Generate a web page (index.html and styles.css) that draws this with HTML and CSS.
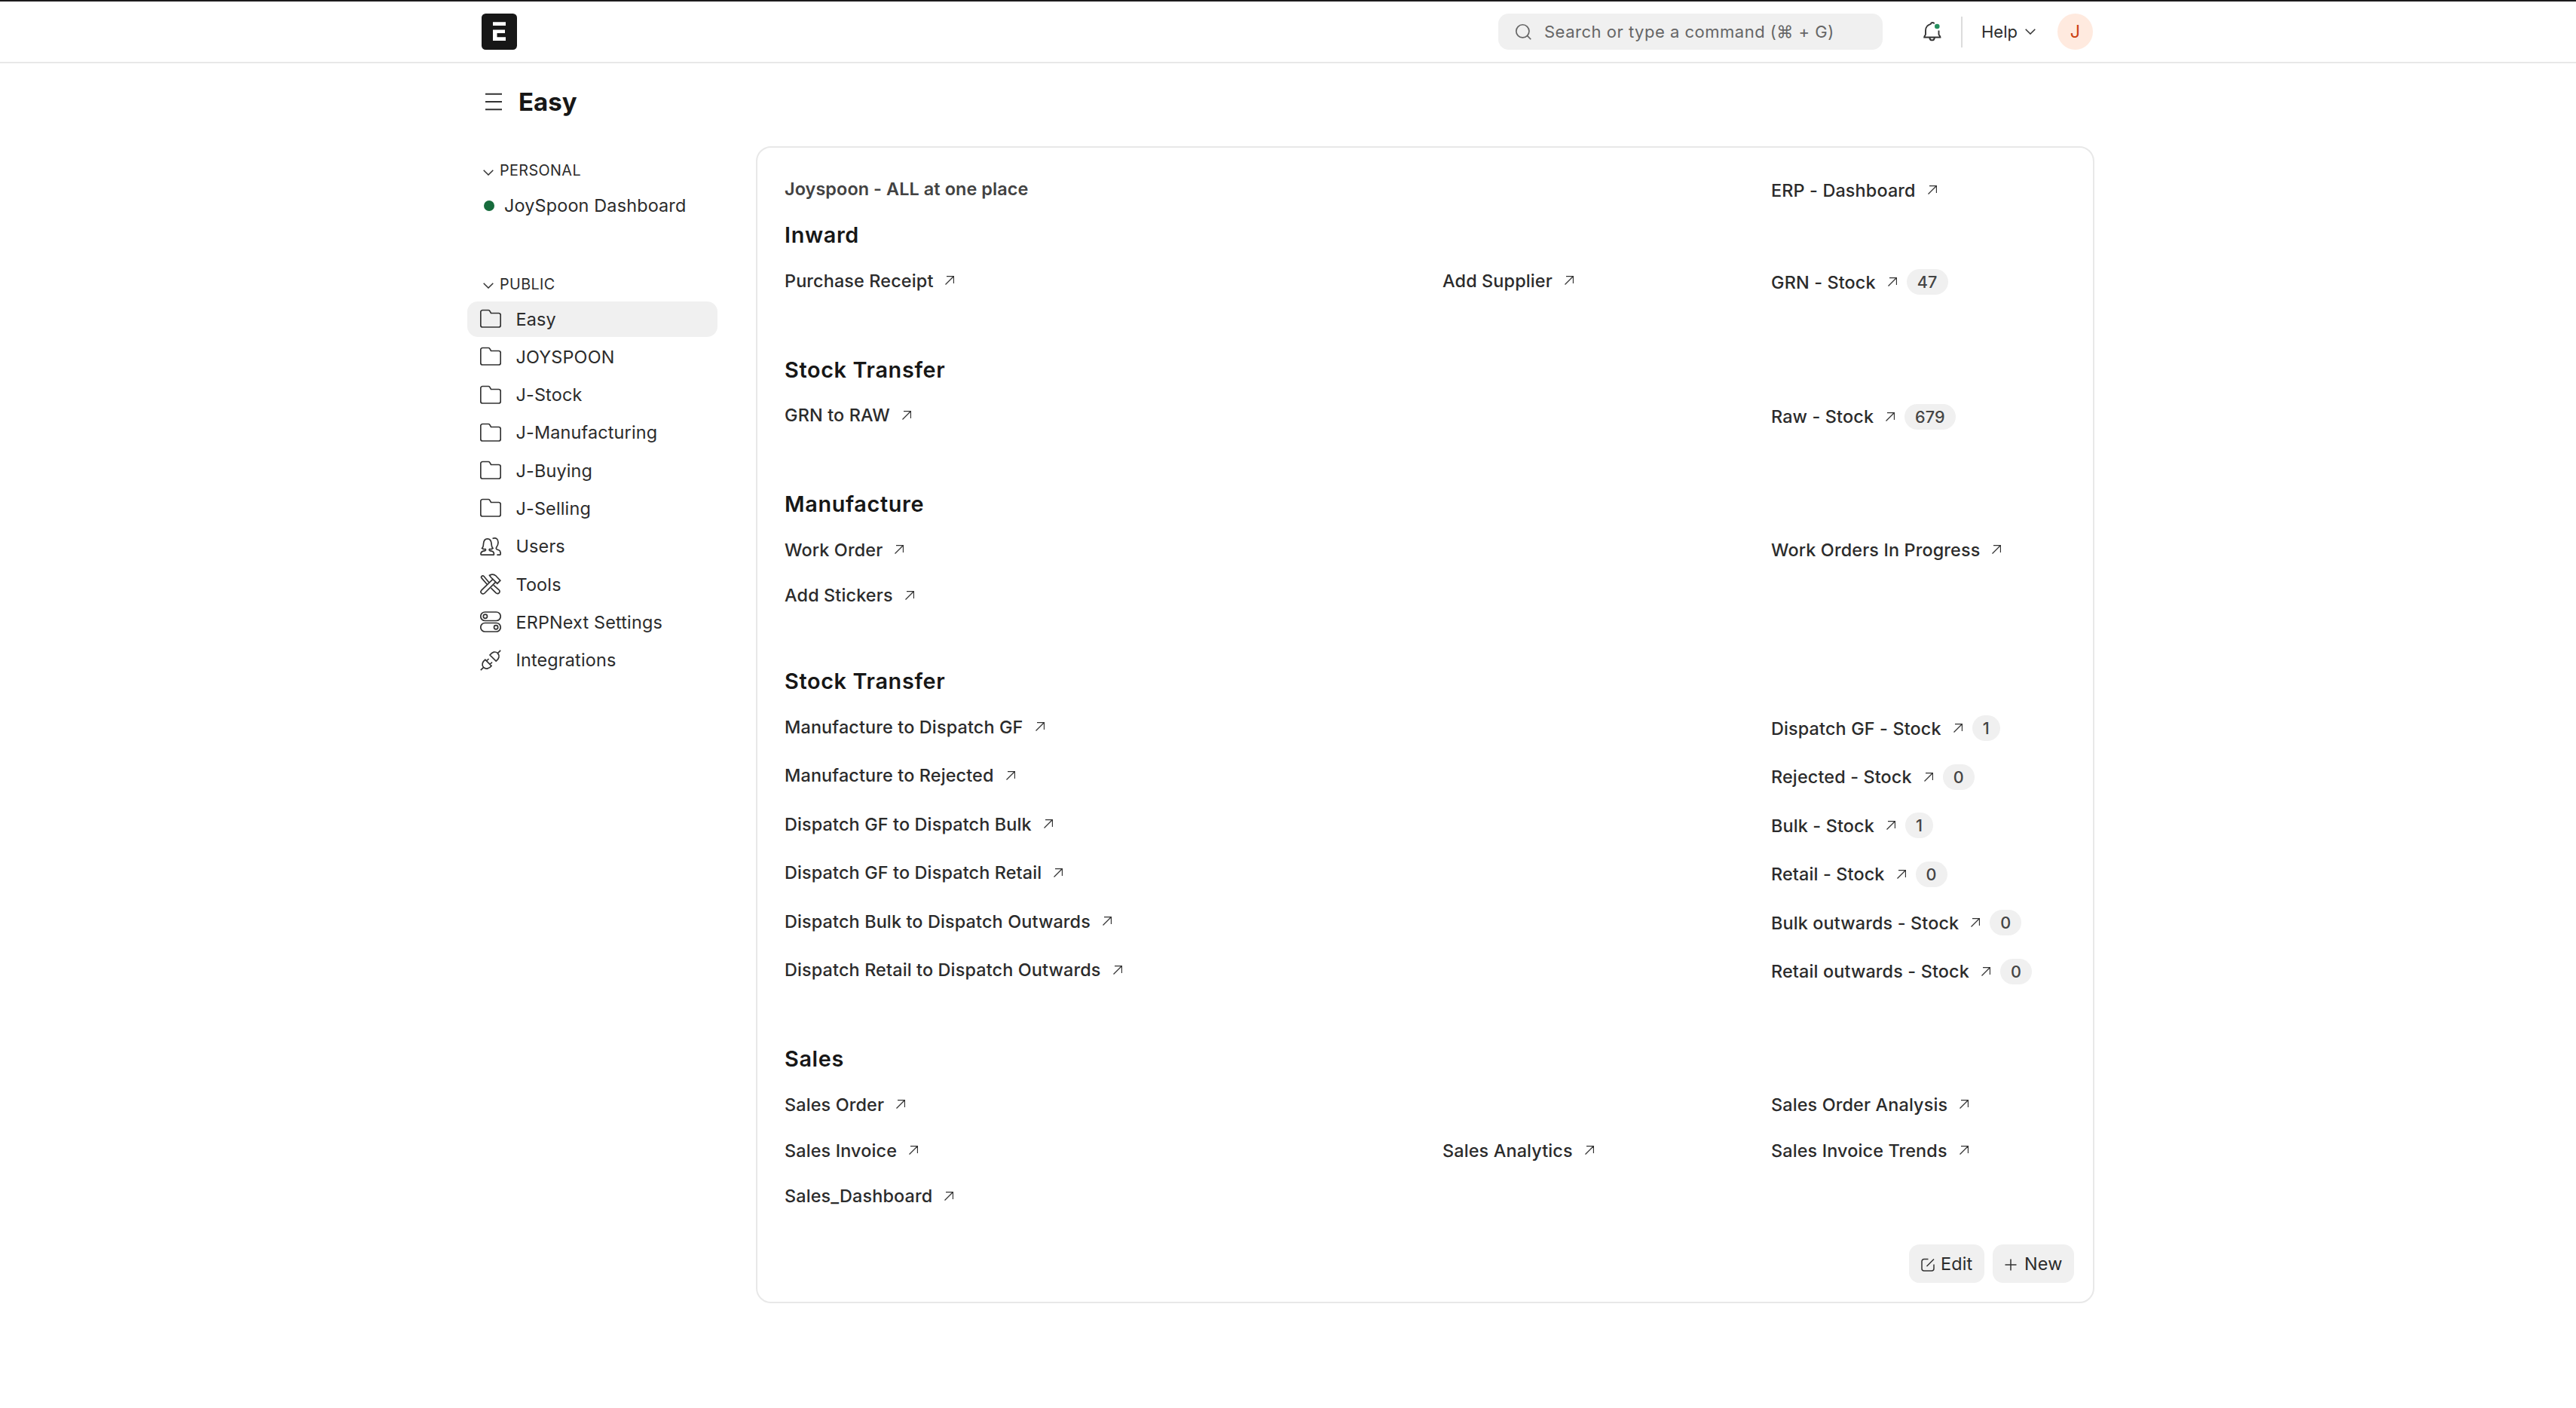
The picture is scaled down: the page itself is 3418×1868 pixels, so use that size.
FILE: index.html
```html
<!DOCTYPE html>
<html lang="en">
<head>
    <meta charset="UTF-8">
    <meta name="viewport" content="width=device-width, initial-scale=1.0">
    <title>Easy</title>
    <link rel="stylesheet" href="styles.css">
</head>
<body>
    <!-- icon sprite -->
    <svg class="sprite">
        <symbol id="icon-arrow" viewBox="0 0 12 12"><path d="M.5 11.5l11-11M2 .5h9.500v9.500"/></symbol>
        <symbol id="icon-down" viewBox="0 0 14 8"><path d="M.7.7L7 7L13.300.7"/></symbol>
        <symbol id="icon-folder" viewBox="0 0 28 28"><path d="M.8 5a2.500 2.500 0 0 1 2.500-2.500H11a2 2 0 0 1 1.700.9L14.500 6.500h10.200a2.500 2.500 0 0 1 2.500 2.500v13.500a2.500 2.500 0 0 1-2.500 2.500H3.300a2.500 2.500 0 0 1-2.500-2.500z"/></symbol>
        <symbol id="icon-users" viewBox="0 0 28 28"><path d="M2 25.200h15.500c.8 0 1-.6.9-1.400-.2-2.300-.8-3-2.400-3.400l-3-.8c-1-.3-1.200-1.600-.4-2.200 1.300.6 3 .2 4.400-1-2-1.500-1.600-3-1.900-6C14.800 6.500 13.300 3.800 9.800 3.800S4.800 6.500 4.500 10.400c-.3 3 .1 4.500-1.900 6 1.400 1.200 3.100 1.600 4.400 1 .8.6.6 1.900-.4 2.200l-3 .8C2 20.800 1.200 21.500 1 23.800c-.1.800.2 1.400 1 1.400zM16.500 3.500c5-1.800 7.700 1.200 7.500 5.500-.1 3-1 4.500-2.200 6-.8 1-.6 2.600.6 3l2.400.8c1.800.6 2.400 1.600 2.400 4.600 0 1.200-.4 1.800-1.400 1.800h-3.500"/></symbol>
        <symbol id="icon-tools" viewBox="0 0 28 28"><path d="M1.800 22.200L17 7.500l3.700 3.700L6 26a2.700 2.700 0 0 1-4.200-3.800zM12.500 2.200C16.500 0 19 1 21 3l5.800 6.200-4 4L14 4.500zM12.200 12.200L5 3.500a1.800 1.800 0 0 0-2.800 2.700l7.500 8.500M18 15.300l7 6.200c3 3-1 6.500-4 4.200l-6.500-6.500"/></symbol>
        <symbol id="icon-settings" viewBox="0 0 28 28"><rect x=".8" y="1" width="26.400" height="11.500" rx="5.700"/><rect x=".8" y="15.500" width="26.400" height="11.500" rx="5.700"/><circle cx="6.900" cy="6.800" r="2.600"/><circle cx="21.100" cy="21.200" r="2.600"/></symbol>
        <symbol id="icon-plug" viewBox="0 0 28 28"><path d="M.8 27.200l3.800-3.800M4.600 23.400c-3-3.500-1.400-7.600 2.200-10.200l8.200 8.200c-2.800 3.600-7 5-10.400 2zM8.500 15l3-3M13 19.500l3-3M27.200.8l-3.800 3.800M23.400 4.600c3 3.500 1.800 7.200-2.200 10.600L13 7C16.200 3 20 1.600 23.400 4.600z"/></symbol>
    </svg>

    <header class="navbar">
        <div class="navbar-inner">
            <svg class="logo" viewBox="0 0 47 48"><rect width="47" height="48" rx="5.500" fill="#171717"/><path d="M15 11.300h17v4.700H15zM15 21.500h16v4.500H20.500v5.300H32V36H15z" fill="#fff"/></svg>
            <div class="search">
                <svg class="search-icon" viewBox="0 0 22 22"><circle cx="9.800" cy="9.800" r="9"/><path d="M16.200 16.200l5 5"/></svg>
                <span>Search or type a command (⌘ + G)</span>
            </div>
            <svg class="bell" viewBox="0 0 24 26"><path d="M14.500 2.600C14 .6 10.500.4 9.800 2.800 5.500 4 3 7.500 3 11.500v5c0 1.500-1.800 2-1.800 4h21.300c0-2-2-2.500-2-4V11.500M8.300 21c.6 4.500 6 4.500 6.600 0"/><circle class="bell-dot" cx="18.300" cy="6" r="3.300"/></svg>
            <div class="divider"></div>
            <div class="help">Help <svg class="down"><use href="#icon-down"/></svg></div>
            <div class="avatar">J</div>
        </div>
    </header>

    <div class="container">
        <div class="page-head">
            <svg class="menu-icon" viewBox="0 0 24 24"><path d="M1 1.700h22M1 12h22M1 22.300h22"/></svg>
            <h1>Easy</h1>
        </div>

        <div class="layout">
            <nav class="sidebar">
                <div class="sidebar-label"><svg class="down"><use href="#icon-down"/></svg>PERSONAL</div>
                <div class="sidebar-item personal"><span class="dot"></span>JoySpoon Dashboard</div>
                <div class="sidebar-label public"><svg class="down"><use href="#icon-down"/></svg>PUBLIC</div>
                <div class="sidebar-item selected"><svg><use href="#icon-folder"/></svg>Easy</div>
                <div class="sidebar-item"><svg><use href="#icon-folder"/></svg>JOYSPOON</div>
                <div class="sidebar-item"><svg><use href="#icon-folder"/></svg>J-Stock</div>
                <div class="sidebar-item"><svg><use href="#icon-folder"/></svg>J-Manufacturing</div>
                <div class="sidebar-item"><svg><use href="#icon-folder"/></svg>J-Buying</div>
                <div class="sidebar-item"><svg><use href="#icon-folder"/></svg>J-Selling</div>
                <div class="sidebar-item"><svg><use href="#icon-users"/></svg>Users</div>
                <div class="sidebar-item"><svg><use href="#icon-tools"/></svg>Tools</div>
                <div class="sidebar-item"><svg><use href="#icon-settings"/></svg>ERPNext Settings</div>
                <div class="sidebar-item"><svg><use href="#icon-plug"/></svg>Integrations</div>
            </nav>

            <main class="workspace">
                <section class="intro">
                    <div class="row">
                        <div class="link note">Joyspoon - ALL at one place</div>
                        <div class="link right counted">ERP - Dashboard <svg><use href="#icon-arrow"/></svg></div>
                    </div>
                </section>

                <section>
                    <h2>Inward</h2>
                    <div class="row">
                        <div class="link">Purchase Receipt <svg><use href="#icon-arrow"/></svg></div>
                        <div class="link middle">Add Supplier <svg><use href="#icon-arrow"/></svg></div>
                        <div class="link right counted">GRN - Stock <svg><use href="#icon-arrow"/></svg><span class="count">47</span></div>
                    </div>
                </section>

                <section>
                    <h2>Stock Transfer</h2>
                    <div class="row">
                        <div class="link">GRN to RAW <svg><use href="#icon-arrow"/></svg></div>
                        <div class="link right counted">Raw - Stock <svg><use href="#icon-arrow"/></svg><span class="count">679</span></div>
                    </div>
                </section>

                <section>
                    <h2>Manufacture</h2>
                    <div class="row">
                        <div class="link">Work Order <svg><use href="#icon-arrow"/></svg></div>
                        <div class="link right">Work Orders In Progress <svg><use href="#icon-arrow"/></svg></div>
                    </div>
                    <div class="row">
                        <div class="link">Add Stickers <svg><use href="#icon-arrow"/></svg></div>
                    </div>
                </section>

                <section>
                    <h2>Stock Transfer</h2>
                    <div class="row">
                        <div class="link">Manufacture to Dispatch GF <svg><use href="#icon-arrow"/></svg></div>
                        <div class="link right counted">Dispatch GF - Stock <svg><use href="#icon-arrow"/></svg><span class="count">1</span></div>
                    </div>
                    <div class="row">
                        <div class="link">Manufacture to Rejected <svg><use href="#icon-arrow"/></svg></div>
                        <div class="link right counted">Rejected - Stock <svg><use href="#icon-arrow"/></svg><span class="count">0</span></div>
                    </div>
                    <div class="row">
                        <div class="link">Dispatch GF to Dispatch Bulk <svg><use href="#icon-arrow"/></svg></div>
                        <div class="link right counted">Bulk - Stock <svg><use href="#icon-arrow"/></svg><span class="count">1</span></div>
                    </div>
                    <div class="row">
                        <div class="link">Dispatch GF to Dispatch Retail <svg><use href="#icon-arrow"/></svg></div>
                        <div class="link right counted">Retail - Stock <svg><use href="#icon-arrow"/></svg><span class="count">0</span></div>
                    </div>
                    <div class="row">
                        <div class="link">Dispatch Bulk to Dispatch Outwards <svg><use href="#icon-arrow"/></svg></div>
                        <div class="link right counted">Bulk outwards - Stock <svg><use href="#icon-arrow"/></svg><span class="count">0</span></div>
                    </div>
                    <div class="row">
                        <div class="link">Dispatch Retail to Dispatch Outwards <svg><use href="#icon-arrow"/></svg></div>
                        <div class="link right counted">Retail outwards - Stock <svg><use href="#icon-arrow"/></svg><span class="count">0</span></div>
                    </div>
                </section>

                <section class="sales">
                    <h2>Sales</h2>
                    <div class="row">
                        <div class="link">Sales Order <svg><use href="#icon-arrow"/></svg></div>
                        <div class="link right">Sales Order Analysis <svg><use href="#icon-arrow"/></svg></div>
                    </div>
                    <div class="row">
                        <div class="link">Sales Invoice <svg><use href="#icon-arrow"/></svg></div>
                        <div class="link middle">Sales Analytics <svg><use href="#icon-arrow"/></svg></div>
                        <div class="link right">Sales Invoice Trends <svg><use href="#icon-arrow"/></svg></div>
                    </div>
                    <div class="row">
                        <div class="link">Sales_Dashboard <svg><use href="#icon-arrow"/></svg></div>
                    </div>
                </section>

                <div class="actions">
                    <button class="btn"><svg viewBox="0 0 18 18"><path d="M9.500 1.500H4A3 3 0 0 0 1 4.500v9.500a3 3 0 0 0 3 3h10a3 3 0 0 0 3-3V8.500M7.500 11L17 1.500"/></svg>Edit</button>
                    <button class="btn new"><svg viewBox="0 0 16 16"><path d="M8 .5v15M.5 8h15"/></svg>New</button>
                </div>
            </main>
        </div>
    </div>
</body>
</html>
```
FILE: styles.css
```css
* {
    box-sizing: border-box;
}
body {
    margin: 0;
    min-height: 1868px;
    background-color: #fff;
    border-top: 2px solid #1c1a1c;
    color: #2b2b2b;
    font-family: "Inter", sans-serif;
    font-size: 23.4px;
    letter-spacing: 0.007em;
}
svg {
    fill: none;
    stroke: #333;
    stroke-width: 1.5;
    flex-shrink: 0;
    overflow: visible;
}
.sprite {
    display: none;
}
.navbar {
    height: 82px;
    border-bottom: 2px solid #e8e8e8;
}
.navbar-inner {
    width: 2138px;
    height: 80px;
    margin-left: 639px;
    display: flex;
    align-items: center;
}
.logo {
    width: 47px;
    height: 48px;
    stroke: none;
}
.search {
    display: flex;
    align-items: center;
    gap: 17px;
    width: 510px;
    height: 48px;
    margin-left: auto;
    padding-left: 23px;
    border-radius: 14px;
    background-color: #f0f0f0;
    color: #666;
    font-size: 22px;
    letter-spacing: 0.023em;
}
.search-icon {
    width: 21px;
    height: 21px;
    stroke: #666;
    stroke-width: 1.8;
}
.bell {
    width: 24px;
    height: 26px;
    margin-left: 54px;
    stroke-width: 1.9;
}
.bell-dot {
    fill: #278f5e;
    stroke: none;
}
.divider {
    width: 2px;
    height: 41px;
    margin-left: 26px;
    background-color: #dcdcdc;
}
.help {
    display: flex;
    align-items: center;
    justify-content: space-between;
    width: 72px;
    margin-left: 25px;
    font-size: 22px;
    letter-spacing: 0;
}
.down {
    width: 14px;
    height: 8px;
}
.avatar {
    width: 47px;
    height: 48px;
    margin-left: 29px;
    border-radius: 50%;
    background-color: #ffeadf;
    color: #cc4314;
    line-height: 48px;
    text-align: center;
}
.container {
    width: 2159px;
    margin-left: 620px;
}
.page-head {
    display: flex;
    align-items: center;
    gap: 21px;
    height: 102px;
    padding-left: 23px;
}
.menu-icon {
    width: 24px;
    height: 24px;
    stroke-width: 2;
}
h1 {
    margin: 0;
    font-size: 33px;
    font-weight: 700;
    letter-spacing: 0;
    color: #171717;
}
.layout {
    display: flex;
    align-items: flex-start;
    padding-top: 6px;
}
.sidebar {
    width: 332px;
    margin-right: 51px;
    padding-top: 16px;
}
.sidebar-label {
    display: flex;
    align-items: center;
    gap: 8px;
    height: 36px;
    padding-left: 21px;
    font-size: 19.8px;
    letter-spacing: 0.02em;
}
.sidebar-label .down {
    margin-top: 5px;
}
.sidebar-label.public {
    margin-top: 62.5px;
    margin-bottom: 5px;
}
.sidebar-item {
    display: flex;
    align-items: center;
    gap: 19.5px;
    height: 47px;
    margin-bottom: 3.3px;
    padding-left: 17px;
    border-radius: 14px;
}
.sidebar-item svg {
    width: 28px;
    height: 28px;
    stroke-width: 1.7;
}
.sidebar-item.personal {
    gap: 13px;
    margin-top: 5px;
    padding-left: 22px;
}
.sidebar-item.selected {
    background-color: #f0f0f0;
}
.dot {
    width: 14px;
    height: 14px;
    border-radius: 50%;
    background-color: #176b3c;
}
.workspace {
    width: 1776px;
    height: 1535px;
    margin-top: 2px;
    padding: 24px 25px 0 36px;
    border: 2px solid #e8e8e8;
    border-radius: 20px;
}
section {
    margin-bottom: 53px;
}
.intro {
    height: 61px;
    margin-bottom: 0;
}
.sales {
    margin-bottom: 34px;
}
h2 {
    margin: 0;
    height: 61px;
    line-height: 61px;
    font-size: 28.8px;
    font-weight: 600;
    letter-spacing: 0.023em;
    color: #171717;
}
.row {
    display: grid;
    grid-template-columns: 873px 436px 1fr;
    align-items: start;
}
.link {
    display: flex;
    align-items: center;
    height: 60.6px;
    font-weight: 460;
    letter-spacing: 0.006em;
    white-space: nowrap;
}
.link svg {
    width: 12px;
    height: 12px;
    margin-left: 16px;
    stroke-width: 1.3;
}
.note {
    font-weight: 580;
    letter-spacing: 0.004em;
    color: #424242;
}
.middle {
    grid-column: 2;
}
.right {
    grid-column: 3;
}
.counted {
    height: 64.5px;
}
.count {
    height: 34px;
    margin-left: 13px;
    padding: 0 14px;
    border-radius: 17px;
    background-color: #f0f0f0;
    color: #444;
    font-size: 21.6px;
    line-height: 34px;
}
.actions {
    display: flex;
    justify-content: flex-end;
    gap: 11px;
}
.btn {
    display: flex;
    align-items: center;
    gap: 8px;
    width: 100px;
    height: 51px;
    padding: 0 0 0 16px;
    border: none;
    border-radius: 14px;
    background-color: #f0f0f0;
    color: #2b2b2b;
    font: inherit;
    letter-spacing: inherit;
}
.btn svg {
    width: 18px;
    height: 18px;
    margin-top: 3px;
}
.btn.new {
    width: 108px;
    gap: 10px;
}
.btn.new svg {
    width: 16px;
    height: 16px;
}
```
